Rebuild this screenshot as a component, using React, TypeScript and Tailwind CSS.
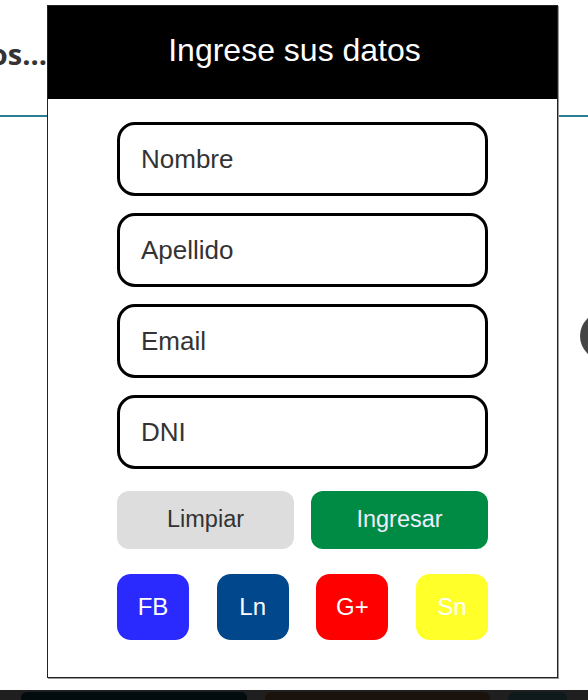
import React from "react";

// Form fields
const Fields = ["Nombre", "Apellido", "Email", "DNI"];

// Social buttons
const Socials = [
  { name: "FB", bg: "bg-[#2a2aff]" },
  { name: "Ln", bg: "bg-[#00478b]" },
  { name: "G+", bg: "bg-[#ff0000]" },
  { name: "Sn", bg: "bg-[#ffff2a]" },
];

const App = () => {
  return (
    <div className="relative w-[588px] h-[700px] overflow-hidden bg-white font-['Liberation_Sans',Arial,sans-serif]">
      {/* page behind the modal */}
      <div className="flex flex-col h-full">
        <div className="h-[115px] relative">
          <div className="absolute left-0 top-[39px] w-[47px] overflow-hidden flex justify-end">
            <span className="whitespace-nowrap text-[29px] font-bold text-[#333] font-['Open_Sans',sans-serif] leading-none">
              Nuestros productos...
            </span>
          </div>
        </div>
        <div className="h-[2px] bg-[#2b7f92]" />
        <div className="flex-1 relative">
          <div className="absolute left-[580px] top-[195px] w-[48px] h-[48px] rounded-full bg-[#444]" />
        </div>
        <div className="h-[10px] bg-[#1f1f1f] flex gap-[18px] px-[21px] pt-[2px]">
          <div className="w-[229px] h-full bg-[#020c0e] rounded-t-md" />
          <div className="w-[227px] h-full bg-[#1a120c] rounded-t-md" />
          <div className="w-[60px] h-full bg-[#0f1a1c] rounded-t-md" />
        </div>
      </div>

      {/* modal */}
      <div className="absolute left-[47px] top-[5px] w-[511px] h-[673px] bg-white border border-[#222] shadow-[1px_1px_0_#999] flex flex-col">
        <div className="h-[93px] bg-black flex items-center justify-center pb-[6px] pr-[16px]">
          <h2 className="text-white text-[32px]">Ingrese sus datos</h2>
        </div>
        <div className="flex flex-col px-[69px] pt-[23px]">
          <div className="flex flex-col gap-[17px]">
            {Fields.map((field) => (
              <div
                key={field}
                className="h-[74px] border-[3px] border-black rounded-[18px] flex items-center pl-[21px] text-[26px] text-[#333]"
              >
                {field}
              </div>
            ))}
          </div>
          <div className="flex gap-[17px] mt-[22px]">
            <button className="flex-1 h-[58px] rounded-[12px] bg-[#dddddd] text-[#333] text-[23.5px]">
              Limpiar
            </button>
            <button className="flex-1 h-[58px] rounded-[12px] bg-[#008b45] text-[#eef] text-[23.5px]">
              Ingresar
            </button>
          </div>
          <div className="flex justify-between mt-[25px]">
            {Socials.map((s) => (
              <button
                key={s.name}
                className={`${s.bg} w-[72px] h-[66px] rounded-[14px] text-white text-[24px]`}
              >
                {s.name}
              </button>
            ))}
          </div>
        </div>
      </div>
    </div>
  );
};

export default App;
